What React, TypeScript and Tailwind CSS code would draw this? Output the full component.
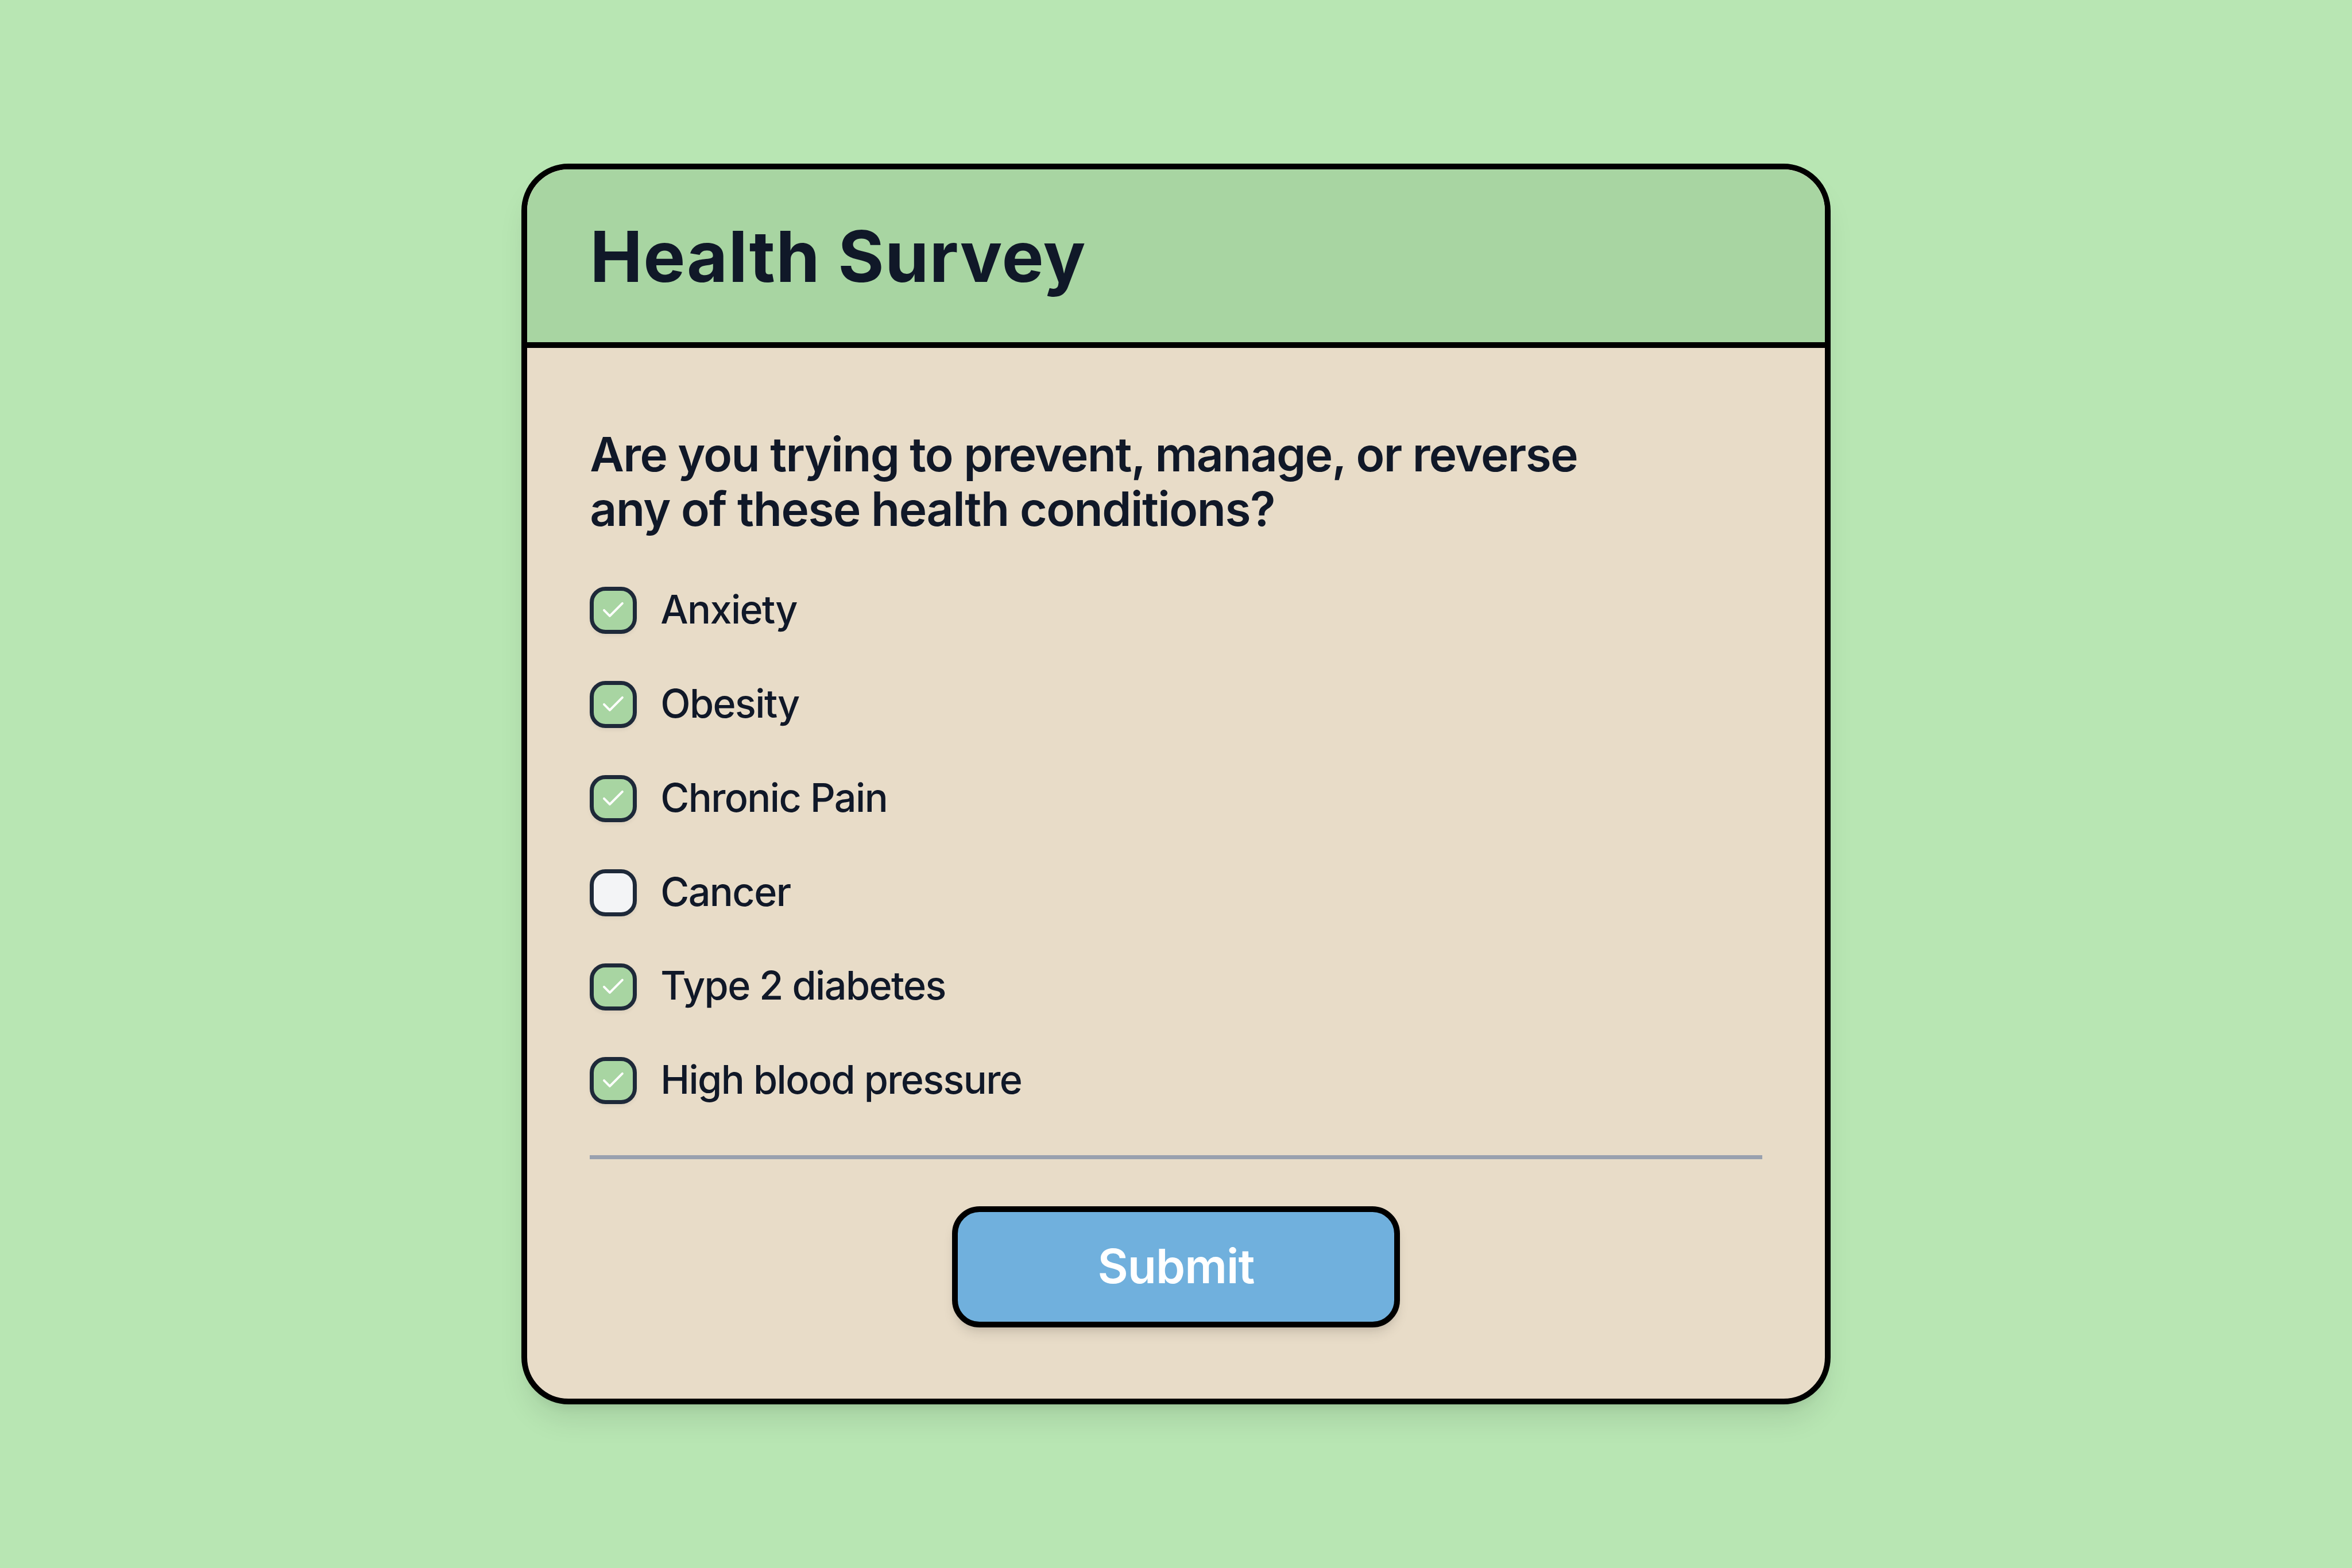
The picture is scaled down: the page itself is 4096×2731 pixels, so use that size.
import React, { useState } from "react";
import { Check } from "lucide-react";

interface Condition {
    label: string;
    checked: boolean;
}

const initialConditions: Condition[] = [
    { label: "Anxiety", checked: true },
    { label: "Obesity", checked: true },
    { label: "Chronic Pain", checked: true },
    { label: "Cancer", checked: false },
    { label: "Type 2 diabetes", checked: true },
    { label: "High blood pressure", checked: true }
];

export default function App() {
    const [conditions, setConditions] = useState(initialConditions);

    const handleToggle = (index: number) => {
        setConditions(prev =>
            prev.map((item, i) =>
                i === index ? { ...item, checked: !item.checked } : item
            )
        );
    };

    return (
        <main className="flex h-[2731px] w-full items-center justify-center bg-[#b8e6b3] font-['Inter',sans-serif] text-gray-900">
            <div className="flex h-[2160.6px] w-[2280.2px] flex-col overflow-hidden rounded-[82px] border-[10px] border-black bg-[#e8dcc8] shadow-[0_34px_51px_-10px_rgb(0_0_0/0.1),0_14px_20px_-14px_rgb(0_0_0/0.1)]">
                <div className="h-[310.8px] shrink-0 border-b-[10px] border-black bg-[#a8d5a2] px-[109.4px] pt-[83.5px]">
                    <h1 className="text-[122.88px] leading-[136.5px] font-bold tracking-[1.2px]">Health Survey</h1>
                </div>

                <div className="flex flex-col px-[109.4px] pt-[137.5px]">
                    <h2 className="text-[81.92px] leading-[95.57px] font-semibold">
                        <span className="block tracking-[-1.6px]">Are you trying to prevent, manage, or reverse</span>
                        <span className="block tracking-[-1.45px]">any of these health conditions?</span>
                    </h2>

                    <div className="mt-[87.75px] flex flex-col gap-[81.92px]">
                        {conditions.map((item, i) => (
                            <label key={item.label} className="flex h-[81.92px] items-center gap-[41px]">
                                <button
                                    type="button"
                                    role="checkbox"
                                    aria-checked={item.checked}
                                    onClick={() => handleToggle(i)}
                                    className={`flex size-[81.92px] shrink-0 items-center justify-center rounded-[27.3px] border-[7px] border-gray-800 shadow-[0_3.4px_6.8px_rgb(0_0_0/0.05)] ${item.checked ? "bg-[#a8d5a2]" : "bg-gray-100"}`}
                                >
                                    {item.checked && <Check className="size-[47.8px] text-white" />}
                                </button>
                                <span className="pb-[2.6px] text-[68.27px] leading-[81.92px] font-medium tracking-[-0.023em]">{item.label}</span>
                            </label>
                        ))}
                    </div>

                    <div className="mt-[88.75px] h-[7px] bg-gray-400" />

                    <button
                        type="button"
                        className="mt-[81.8px] flex h-[211.6px] w-[780px] items-center justify-center self-center rounded-[47.8px] border-[10px] border-black bg-[#70b0dd] pb-px text-[81.92px] font-semibold tracking-[-0.9px] text-white shadow-[0_14px_20px_-3.4px_rgb(0_0_0/0.1),0_7px_14px_-7px_rgb(0_0_0/0.1)]"
                    >
                        Submit
                    </button>
                </div>
            </div>
        </main>
    );
}
